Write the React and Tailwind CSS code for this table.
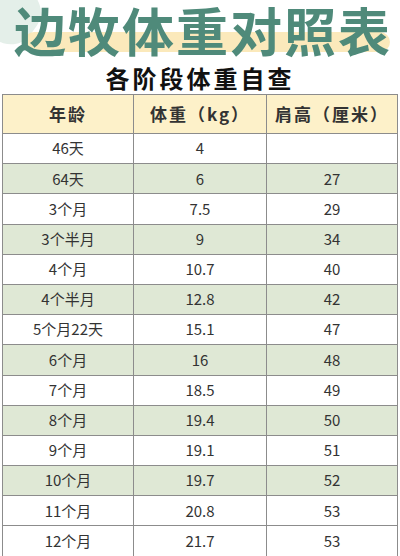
import React from "react"

const rows = [
  ["46天", "4", "", false],
  ["64天", "6", "27", true],
  ["3个月", "7.5", "29", false],
  ["3个半月", "9", "34", true],
  ["4个月", "10.7", "40", false],
  ["4个半月", "12.8", "42", true],
  ["5个月22天", "15.1", "47", false],
  ["6个月", "16", "48", true],
  ["7个月", "18.5", "49", false],
  ["8个月", "19.4", "50", true],
  ["9个月", "19.1", "51", false],
  ["10个月", "19.7", "52", true],
  ["11个月", "20.8", "53", false],
  ["12个月", "21.7", "53", false],
]

const font = { fontFamily: '"Noto Sans CJK SC", "Noto Sans", sans-serif' }

export default function App() {
  return (
    <div className="relative w-[400px] h-[556px] overflow-hidden bg-white" style={font}>
      {/* corner leaf */}
      <div className="absolute -left-[30px] -top-[20px] w-[70px] h-[60px] rotate-[35deg] rounded-[40%] bg-[#e4efe9]" />

      <div className="relative h-[62px] flex justify-center">
        <div className="absolute left-[24px] right-[10px] top-[32px] h-[20px] rounded-full bg-[#fbe7b4] opacity-90" />
        <h1 className="relative pl-[6px] text-[52px] leading-[60px] font-bold tracking-[2px] text-[#4f8a7a]">
          边牧体重对照表
        </h1>
      </div>

      <div className="h-[32px] flex items-center justify-center">
        <h2 className="text-[24px] leading-[30px] font-bold tracking-[3px] text-[#111]">各阶段体重自查</h2>
      </div>

      <div className="mx-[2px] border border-[#8c8c8c]">
        <div className="flex h-[39px] bg-[#fdf1c9] border-b border-[#8c8c8c] text-[17px] font-bold text-[#333] tracking-[2px]">
          <div className="w-[131px] flex items-center justify-center border-r border-[#8c8c8c]">年龄</div>
          <div className="w-[133px] flex items-center justify-center border-r border-[#8c8c8c]">体重（kg）</div>
          <div className="flex-1 flex items-center justify-center">肩高（厘米）</div>
        </div>
        {rows.map(([age, w, h, green]) => (
          <div
            key={age}
            className={`flex h-[30.2px] border-b border-[#8c8c8c] text-[15px] text-[#333] ${green ? "bg-[#dfe8d5]" : "bg-white"}`}
          >
            <div className="w-[131px] flex items-center justify-center border-r border-[#8c8c8c]">{age}</div>
            <div className="w-[133px] flex items-center justify-center border-r border-[#8c8c8c]">{w}</div>
            <div className="flex-1 flex items-center justify-center">{h}</div>
          </div>
        ))}
      </div>
    </div>
  )
}
